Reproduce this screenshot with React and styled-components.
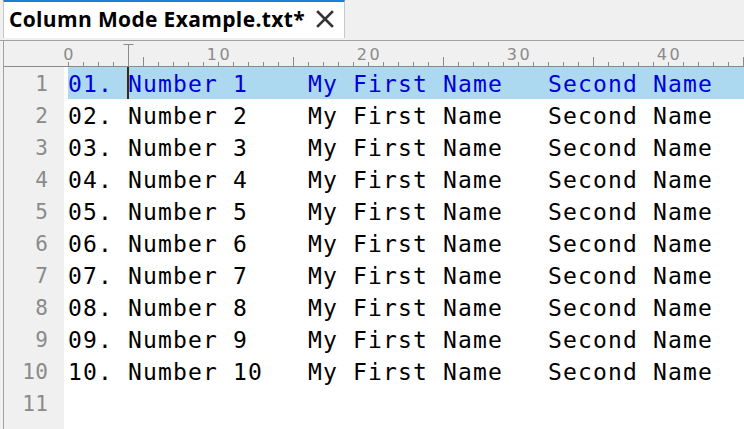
import React from "react";
import styled, { createGlobalStyle } from "styled-components";

const GlobalStyle = createGlobalStyle`
  html, body { margin: 0; padding: 0; background: #f0f0f0; }
  body { width: 744px; height: 429px; overflow: hidden; }
`;

const CHAR = 15;
const ORIGIN = 64; // x of column 0 inside editor (editor starts at x=4)
const ROW_H = 32;

const Window = styled.div`
  display: flex;
  flex-direction: column;
  width: 744px;
  height: 429px;
  background: #f0f0f0;
`;

const TabBar = styled.div`
  display: flex;
  align-items: flex-end;
  height: 41px;
  border-bottom: 1px solid #a0a0a0;
  box-sizing: border-box;
  padding-left: 3px;
`;

const Tab = styled.div`
  display: flex;
  align-items: center;
  gap: 11px;
  height: 38px;
  margin-bottom: 2px;
  box-sizing: border-box;
  padding: 0 10px 2px 5px;
  background: #ffffff;
  border-top: 2px solid #1a7fd4;
  border-left: 1px solid #c8c8c8;
  border-right: 1px solid #c8c8c8;
`;

const TabTitle = styled.span`
  font-family: "Open Sans", "Noto Sans", sans-serif;
  font-weight: 700;
  font-size: 21px;
  color: #000;
  letter-spacing: 0.35px;
`;

const Editor = styled.div`
  flex: 1;
  display: flex;
  flex-direction: column;
  margin-left: 3px;
  border-left: 1px solid #a0a0a0;
  min-height: 0;
`;

const RulerWrap = styled.div`
  height: 26px;
  background: #f0f0f0;
`;

const Body = styled.div`
  flex: 1;
  display: flex;
  min-height: 0;
`;

const Gutter = styled.div`
  width: 60px;
  background: #f0f0f0;
  display: flex;
  flex-direction: column;
`;

const LineNo = styled.div`
  height: ${ROW_H}px;
  box-sizing: border-box;
  padding-top: 3px;
  line-height: 29px;
  text-align: right;
  padding-right: 16px;
  font-family: "DejaVu Sans Mono", monospace;
  font-size: 21px;
  letter-spacing: 0.2px;
  color: #8a8a8a;
`;

const Code = styled.div`
  flex: 1;
  background: #ffffff;
  padding-left: 4px;
  display: flex;
  flex-direction: column;
`;

const Line = styled.div`
  position: relative;
  height: ${ROW_H}px;
  box-sizing: border-box;
  padding-top: 3px;
  line-height: 29px;
  white-space: pre;
  font-family: "DejaVu Sans Mono", monospace;
  font-size: 23px;
  letter-spacing: 1.15px;
  color: ${(p) => (p.$active ? "#0000d8" : "#000000")};
  background: ${(p) => (p.$active ? "#acd8f0" : "transparent")};
`;

const Caret = styled.span`
  position: absolute;
  top: 0;
  bottom: 0;
  width: 2px;
  background: #3a2a10;
`;

const lines = Array.from({ length: 10 }, (_, i) => {
  const n = i + 1;
  const nn = String(n).padStart(2, "0");
  return `${nn}. ${`Number ${n}`.padEnd(12, " ")}My First Name   Second Name`;
});

function Ruler() {
  const w = 740;
  const base = 25;
  const ticks = [];
  for (let c = 0; c <= 45; c++) {
    const x = ORIGIN + c * CHAR + 0.5;
    if (x > w) break;
    let h = 4;
    if (c % 10 === 0) h = 4;
    else if (c % 5 === 0) h = 9;
    ticks.push(<line key={"t" + c} x1={x} x2={x} y1={base} y2={base - h} stroke="#8a8a8a" strokeWidth="1" />);
    if (c % 10 === 0) {
      ticks.push(
        <text
          key={"l" + c}
          x={x + 1}
          y={base - 6}
          textAnchor="middle"
          fontFamily="'DejaVu Sans', sans-serif"
          fontSize="16"
          letterSpacing="2.5"
          fill="#8a8a8a"
        >
          {c}
        </text>
      );
    }
  }
  const cx = ORIGIN + 4 * CHAR + 0.5;
  return (
    <svg width={w} height={26} style={{ display: "block" }}>
      <line x1="0" x2={w} y1={base + 0.5} y2={base + 0.5} stroke="#8a8a8a" strokeWidth="1" />
      {ticks}
      <line x1={cx} x2={cx} y1={3} y2={base} stroke="#8a8a8a" strokeWidth="1" />
      <line x1={cx - 5} x2={cx + 5} y1={3.5} y2={3.5} stroke="#8a8a8a" strokeWidth="1" />
    </svg>
  );
}

function CloseIcon() {
  return (
    <svg width="18" height="18" viewBox="0 0 18 18">
      <path d="M2 2 L16 16 M16 2 L2 16" stroke="#333" strokeWidth="2.6" strokeLinecap="square" />
    </svg>
  );
}

export default function App() {
  return (
    <>
      <GlobalStyle />
      <Window>
        <TabBar>
          <Tab>
            <TabTitle>Column Mode Example.txt*</TabTitle>
            <CloseIcon />
          </Tab>
        </TabBar>
        <Editor>
          <RulerWrap>
            <Ruler />
          </RulerWrap>
          <Body>
            <Gutter>
              {Array.from({ length: 12 }, (_, i) => (
                <LineNo key={i}>{i < 11 ? i + 1 : ""}</LineNo>
              ))}
            </Gutter>
            <Code>
              {lines.map((t, i) => (
                <Line key={i} $active={i === 0}>
                  {t}
                  {i === 0 && <Caret style={{ left: 4 * CHAR - 1 }} />}
                </Line>
              ))}
              <Line />
            </Code>
          </Body>
        </Editor>
      </Window>
    </>
  );
}
